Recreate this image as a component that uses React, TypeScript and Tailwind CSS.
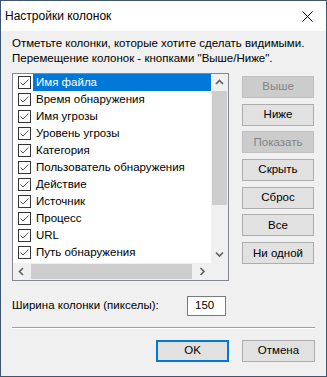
import React from "react";

const items = [
  "Имя файла",
  "Время обнаружения",
  "Имя угрозы",
  "Уровень угрозы",
  "Категория",
  "Пользователь обнаружения",
  "Действие",
  "Источник",
  "Процесс",
  "URL",
  "Путь обнаружения",
];

const sideButtons = [
  { label: "Выше", disabled: true },
  { label: "Ниже", disabled: false },
  { label: "Показать", disabled: true },
  { label: "Скрыть", disabled: false },
  { label: "Сброс", disabled: false },
  { label: "Все", disabled: false },
  { label: "Ни одной", disabled: false },
];

function CheckBox() {
  return (
    <svg width="13" height="13" viewBox="0 0 13 13" className="shrink-0">
      <rect x="0.5" y="0.5" width="12" height="12" fill="#fff" stroke="#333" />
      <path d="M2.5 6.5 L5 9 L10.5 3.5" fill="none" stroke="#555" strokeWidth="1" />
    </svg>
  );
}

function Chevron({ dir }: { dir: "up" | "down" | "left" | "right" }) {
  const d = {
    up: "M1 6 L4.5 2.5 L8 6",
    down: "M1 2.5 L4.5 6 L8 2.5",
    left: "M6 1 L2.5 4.5 L6 8",
    right: "M2.5 1 L6 4.5 L2.5 8",
  }[dir];
  return (
    <svg width="9" height="9" viewBox="0 0 9 9">
      <path d={d} fill="none" stroke="#606060" strokeWidth="1.6" />
    </svg>
  );
}

export default function App() {
  return (
    <div
      className="w-[327px] h-[377px] bg-[#f0f0f0] border border-[#3f5670] flex flex-col text-[11.5px] text-black whitespace-nowrap overflow-hidden"
      style={{ fontFamily: '"Liberation Sans", Arial, sans-serif' }}
    >
      {/* Title bar */}
      <div className="h-[30px] bg-white flex items-center justify-between pl-[4px] pr-[13px] shrink-0">
        <span className="text-[12px] leading-none">Настройки колонок</span>
        <svg width="11" height="11" viewBox="0 0 11 11">
          <path d="M0.5 0.5 L10.5 10.5 M10.5 0.5 L0.5 10.5" stroke="#000" strokeWidth="1" />
        </svg>
      </div>

      {/* Description */}
      <div className="pl-[11px] pt-[5px] leading-[15px] h-[35px] shrink-0">
        <p>Отметьте колонки, которые хотите сделать видимыми.</p>
        <p>Перемещение колонок - кнопками "Выше/Ниже".</p>
      </div>

      <div className="flex pl-[11px] mt-[7px] shrink-0">
        {/* List box */}
        <div className="w-[217px] h-[208px] border border-[#828790] bg-white flex flex-col shrink-0">
          <div className="flex h-[189px]">
            <div className="w-[198px] overflow-hidden">
              {items.map((it, i) => (
                <div key={it} className="h-[17px] flex items-center pl-[5px]">
                  <CheckBox />
                  <span
                    className={
                      i === 0
                        ? "ml-[2px] pl-[3px] flex-1 h-full flex items-center bg-[#0078d7] text-white"
                        : "ml-[2px] pl-[3px] flex-1 h-full flex items-center text-[#000]"
                    }
                  >
                    {it}
                  </span>
                </div>
              ))}
            </div>
            {/* Vertical scrollbar */}
            <div className="w-[17px] bg-[#f0f0f0] flex flex-col">
              <div className="h-[17px] flex items-center justify-center">
                <Chevron dir="up" />
              </div>
              <div className="flex-1 flex flex-col">
                <div className="h-[114px] mx-[1px] bg-[#cdcdcd]" />
              </div>
              <div className="h-[17px] flex items-center justify-center">
                <Chevron dir="down" />
              </div>
            </div>
          </div>
          {/* Horizontal scrollbar */}
          <div className="flex h-[17px]">
            <div className="w-[198px] bg-[#f0f0f0] flex items-center">
              <div className="w-[17px] flex items-center justify-center">
                <Chevron dir="left" />
              </div>
              <div className="flex-1 h-full py-[1px] pl-[1px] pr-[2px]">
                <div className="w-[161px] h-full bg-[#cdcdcd]" />
              </div>
              <div className="w-[17px] flex items-center justify-center">
                <Chevron dir="right" />
              </div>
            </div>
            <div className="w-[17px] bg-[#f0f0f0]" />
          </div>
        </div>

        {/* Side buttons */}
        <div className="flex flex-col gap-[5.7px] ml-[13px] mt-[3px]">
          {sideButtons.map((b) => (
            <div
              key={b.label}
              className={
                b.disabled
                  ? "w-[72px] h-[22px] border border-[#bfbfbf] bg-[#cccccc] text-[#838383] flex items-center justify-center"
                  : "w-[72px] h-[22px] border border-[#adadad] bg-[#e1e1e1] flex items-center justify-center"
              }
            >
              {b.label}
            </div>
          ))}
        </div>
      </div>

      {/* Column width */}
      <div className="flex items-center pl-[11px] mt-[15px] h-[20px] shrink-0">
        <span className="w-[175px]">Ширина колонки (пикселы):</span>
        <div className="w-[39px] h-[20px] border border-[#7a7a7a] bg-white flex items-center pl-[7px]">
          150
        </div>
      </div>

      {/* Separator */}
      <div className="mx-[11px] mt-[11px] border-t border-[#a0a0a0] border-b border-b-white shrink-0" />

      {/* Bottom buttons */}
      <div className="flex justify-end gap-[13px] pr-[11px] mt-[11px] shrink-0">
        <div className="w-[73px] h-[22px] border-2 border-[#0078d7] bg-[#e1e1e1] flex items-center justify-center">
          OK
        </div>
        <div className="w-[73px] h-[22px] border border-[#adadad] bg-[#e1e1e1] flex items-center justify-center">
          Отмена
        </div>
      </div>
    </div>
  );
}
